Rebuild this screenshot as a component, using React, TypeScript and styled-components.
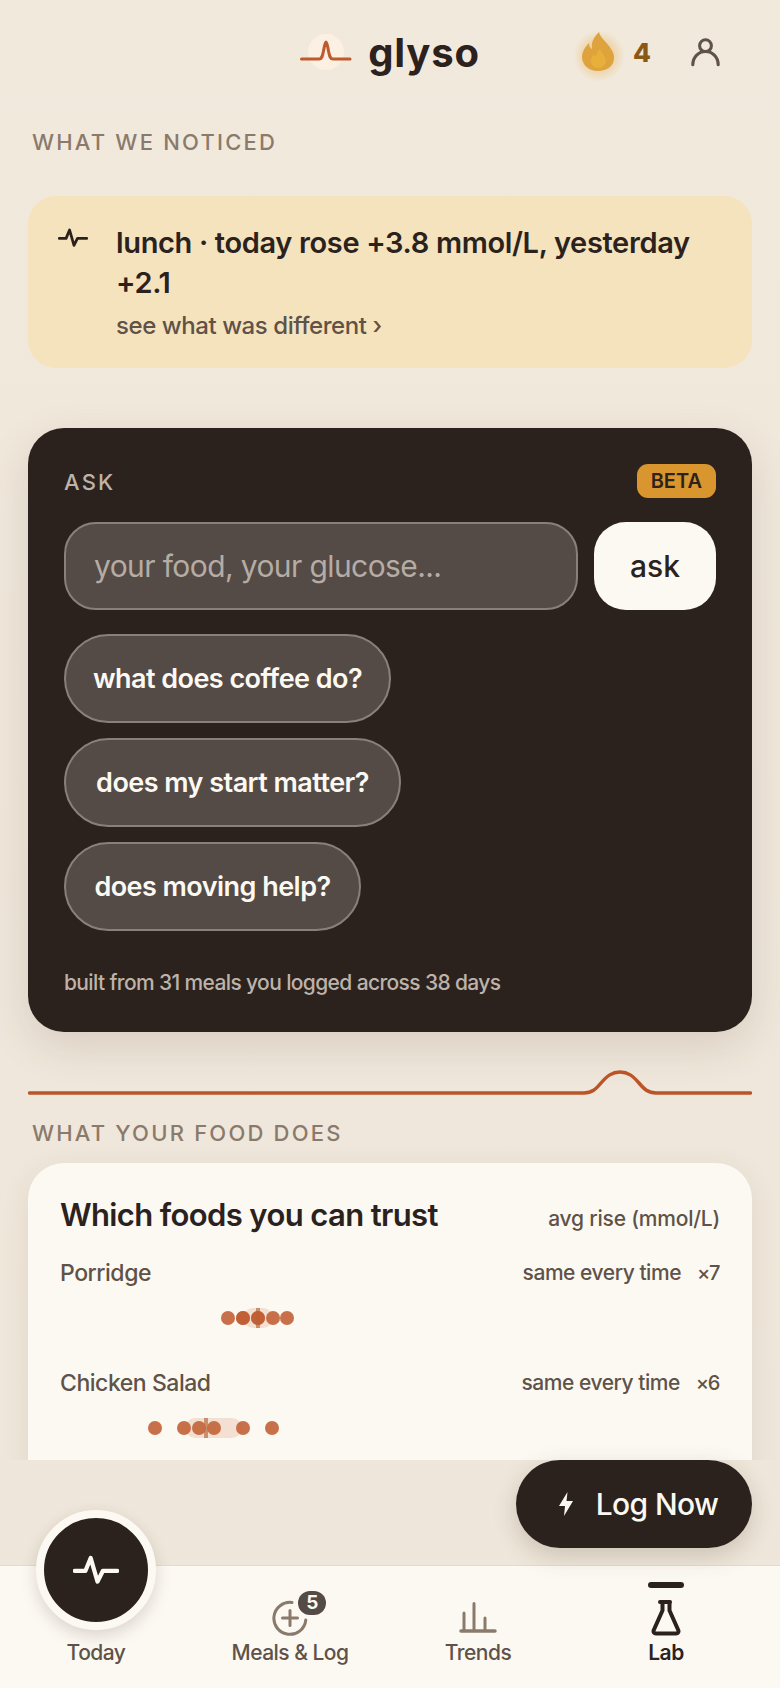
import React from 'react';
import styled, { createGlobalStyle } from 'styled-components';

const GlobalStyle = createGlobalStyle`
    * { box-sizing: border-box; }
    html, body { margin: 0; padding: 0; background: #f2e9dd; }
    body { font-family: Inter, "Noto Sans", sans-serif; color: #2b221d; }
`

const Screen = styled.div`
    position: relative;
    width: 780px;
    height: 1688px;
    overflow: hidden;
    display: flex;
    flex-direction: column;
    background: linear-gradient(#f2e9dd, #eee6da);
`
const Scroller = styled.main`
    flex: 0 0 1460px;
    overflow: hidden;
    padding: 0 28px;
`
const Header = styled.header`
    height: 104px;
    margin: 0 -28px;
    display: grid;
    grid-template-columns: 1fr auto 1fr;
    align-items: center;
`
const Brand = styled.div`
    grid-column: 2;
    display: flex;
    align-items: center;
    gap: 16px;
`
const Word = styled.span`
    font-size: 40px;
    font-weight: 700;
    letter-spacing: 0.02em;
`
const Streak = styled.div`
    justify-self: end;
    display: flex;
    align-items: center;
    padding-right: 60px;
`
const Flame = styled.svg`
    margin: 14px -11px 0;
`
const Count = styled.span`
    font-size: 26px;
    font-weight: 800;
    color: #8a5a14;
    margin: 0 40px 0 18px;
`
const SectionLabel = styled.h2<{ $top: number; $bottom: number }>`
    margin: ${p => p.$top}px 0 ${p => p.$bottom}px 4px;
    font-size: 22px;
    line-height: 28px;
    font-weight: 500;
    letter-spacing: 0.1em;
    color: #8a7a6c;
`
const Notice = styled.section`
    display: grid;
    grid-template-columns: 58px 1fr;
    padding: 27px 30px 24px 30px;
    height: 172px;
    border-radius: 28px;
    background: #f4e3bd;
`
const NoticeIcon = styled.div`
    padding-top: 5px;
`
const NoticeTitle = styled.div`
    font-size: 29px;
    line-height: 40px;
    font-weight: 600;
    letter-spacing: -0.012em;
`
const NoticeLink = styled.div`
    margin-top: 6px;
    font-size: 24px;
    line-height: 34px;
    font-weight: 500;
    letter-spacing: -0.018em;
    color: #5f5248;
`
const AskCard = styled.section`
    margin-top: 60px;
    height: 604px;
    padding: 36px 36px 0 36px;
    border-radius: 36px;
    background: #2b221d;
    box-shadow: 0 14px 44px rgba(70, 50, 30, 0.14);
`
const AskTop = styled.div`
    display: flex;
    justify-content: space-between;
    align-items: center;
    height: 34px;
`
const AskLabel = styled.span`
    padding-top: 2px;
    font-size: 22px;
    font-weight: 500;
    letter-spacing: 0.1em;
    color: #bdb3aa;
`
const Beta = styled.span`
    padding: 0 14px;
    height: 34px;
    line-height: 34px;
    border-radius: 11px;
    background: #d9962e;
    font-size: 20px;
    font-weight: 600;
    color: #2b221d;
`
const AskRow = styled.div`
    display: flex;
    gap: 16px;
    margin-top: 24px;
    height: 88px;
`
const AskInput = styled.div`
    flex: 1;
    display: flex;
    align-items: center;
    padding: 0 28px;
    border: 2px solid #8a807a;
    border-radius: 32px;
    background: #544b46;
    font-size: 30px;
    letter-spacing: -0.02em;
    color: #b5aca5;
`
const AskButton = styled.button`
    flex: 0 0 122px;
    border: 0;
    border-radius: 32px;
    background: #fcf9f3;
    font: 500 30px Inter, sans-serif;
    color: #2b221d;
`
const Chips = styled.div`
    margin-top: 24px;
    display: flex;
    flex-direction: column;
    align-items: flex-start;
    gap: 15px;
`
const Chip = styled.button<{ $width: number }>`
    width: ${p => p.$width}px;
    height: 89px;
    padding: 0;
    border: 2px solid #8a807a;
    border-radius: 45px;
    background: #544b46;
    font: 600 27px Inter, sans-serif;
    letter-spacing: -0.02em;
    color: #fcf9f3;
`
const AskNote = styled.p`
    margin: 37px 0 0;
    font-size: 21px;
    line-height: 30px;
    font-weight: 500;
    letter-spacing: -0.03em;
    color: #bdb3aa;
`
const Divider = styled.svg`
    display: block;
    margin-top: 31px;
    width: 724px;
    height: 32px;
`
const FoodCard = styled.section`
    height: 400px;
    padding: 31px 32px;
    border-radius: 36px;
    background: #fcf9f3;
    box-shadow: 0 6px 30px rgba(70, 50, 30, 0.08);
`
const FoodTop = styled.div`
    display: flex;
    justify-content: space-between;
    align-items: baseline;
`
const FoodTitle = styled.h3`
    margin: 0;
    font-size: 31px;
    line-height: 42px;
    font-weight: 600;
    letter-spacing: -0.02em;
`
const FoodUnit = styled.span`
    font-size: 21px;
    font-weight: 500;
    letter-spacing: -0.01em;
    color: #5f5248;
`
const FoodRow = styled.div`
    height: 110px;
    padding-top: 21px;
`
const FoodHead = styled.div`
    display: flex;
    justify-content: space-between;
    font-size: 23px;
    line-height: 32px;
    font-weight: 500;
    letter-spacing: -0.02em;
    color: #5f5248;
`
const FoodMeta = styled.span`
    display: flex;
    gap: 16px;
    font-size: 21px;
`
const FoodTimes = styled.span`
    font-size: 20px;
    letter-spacing: -0.07em;
    padding-right: 1px;
`
const Strip = styled.svg`
    display: block;
    margin-top: 15px;
    width: 660px;
    height: 28px;
`
const LogNow = styled.button`
    position: absolute;
    top: 1460px;
    right: 28px;
    width: 236px;
    height: 88px;
    display: flex;
    align-items: center;
    justify-content: center;
    gap: 22px;
    padding: 0 0 0 8px;
    border: 0;
    border-radius: 44px;
    background: #2b221d;
    box-shadow: 0 8px 24px rgba(70, 50, 30, 0.2);
    font: 500 30px Inter, sans-serif;
    letter-spacing: -0.02em;
    color: #fcf9f3;
`
const TodayFab = styled.div`
    position: absolute;
    left: 36px;
    top: 1510px;
    z-index: 2;
    width: 120px;
    height: 120px;
    display: flex;
    align-items: center;
    justify-content: center;
    border: 8px solid #fcf9f3;
    border-radius: 50%;
    background: #2b221d;
    box-shadow: 0 6px 16px rgba(70, 50, 30, 0.18);
`
const Nav = styled.nav`
    margin-top: auto;
    height: 123px;
    display: grid;
    grid-template-columns: 192px 196px 180px 196px;
    background: #fcf9f3;
    border-top: 1px solid #e4dace;
`
const NavItem = styled.div<{ $active?: boolean }>`
    position: relative;
    display: flex;
    flex-direction: column;
    align-items: center;
    justify-content: flex-end;
    padding-bottom: 20px;
    font-size: 21px;
    line-height: 30px;
    font-weight: ${p => (p.$active ? 600 : 500)};
    letter-spacing: -0.025em;
    color: ${p => (p.$active ? '#2b221d' : '#5f5248')};
`
const NavIcon = styled.div`
    position: relative;
    height: 40px;
    display: flex;
    align-items: flex-end;
    margin-bottom: 2px;
`
const Badge = styled.span`
    position: absolute;
    top: -5px;
    right: -18px;
    width: 28px;
    height: 24px;
    border-radius: 12px;
    background: #544b46;
    color: #fcf9f3;
    font-size: 19px;
    line-height: 24px;
    font-weight: 700;
    text-align: center;
`
const ActiveBar = styled.span`
    position: absolute;
    top: 16px;
    width: 36px;
    height: 6px;
    border-radius: 3px;
    background: #2b221d;
`

const chips = [
    { text: 'what does coffee do?', width: 327 },
    { text: 'does my start matter?', width: 337 },
    { text: 'does moving help?', width: 297 },
];

const foods = [
    { name: 'Porridge', times: 7, dots: [168, 183, 198, 213, 227], extra: [183, 198], band: [183, 213], median: 198 },
    { name: 'Chicken Salad', times: 6, dots: [95, 124, 139, 154, 183, 212], extra: [], band: [125, 182], median: 146 },
];

function Pulse({ size, color, width }: { size: number; color: string; width: number }) {
    return (
        <svg width={size} height={size * 0.66} viewBox="0 0 30 20" fill="none">
            <path d="M1 10.5h7l3.5-8.5 4.5 15.5 3.5-7h9.5" stroke={color} strokeWidth={width} strokeLinecap="round" strokeLinejoin="round" />
        </svg>
    );
}

export default function App(): JSX.Element {
    return (
        <Screen>
            <GlobalStyle />
            <Scroller>
                <Header>
                    <Brand>
                        <svg width="52" height="40" viewBox="0 0 52 40" fill="none">
                            <ellipse cx="26" cy="20" rx="18" ry="18" fill="#fbf0e2" />
                            <path d="M1.500 27H19c3 0 3.500-3 4.500-8 1-5 1.500-9 2.500-9s1.500 4 2.500 9c1 5 1.500 8 4.500 8h17" stroke="#be5a2c" strokeWidth="3" strokeLinecap="round" />
                        </svg>
                        <Word>glyso</Word>
                    </Brand>
                    <Streak>
                        <Flame width="56" height="60" viewBox="0 0 56 60">
                            <defs>
                                <radialGradient id="glow">
                                    <stop offset="55%" stopColor="#e6b45a" stopOpacity="0.38" />
                                    <stop offset="100%" stopColor="#e6b45a" stopOpacity="0" />
                                </radialGradient>
                            </defs>
                            <circle cx="29" cy="27" r="26" fill="url(#glow)" />
                            <path d="M29 3C30 9 38 14 41 20C43 23 44 25 44 29C44 37 37 42 28 42C19 42 12 36 12 28C12 23 15 18 19 14C19 17 20 19 22 20C21 13 24 8 29 3Z" fill="#dfa33e" />
                            <path d="M30 20C31 24 36 27 36 32C36 36 32 39 28.500 39C24 39 21 36 21 32C21 29 22 27 24 25C24.500 26.500 25 27 26 27.500C26 25 28 22 30 20Z" fill="#e6b03a" />
                        </Flame>
                        <Count>4</Count>
                        <svg width="29" height="30" viewBox="0 0 32 32" fill="none" stroke="#5f5248" strokeWidth="3.400" strokeLinecap="round">
                            <circle cx="16" cy="9" r="6.500" />
                            <path d="M2 30c0-8 6-14.500 14-14.500S30 22 30 30" />
                        </svg>
                    </Streak>
                </Header>
                <SectionLabel $top={24} $bottom={40}>WHAT WE NOTICED</SectionLabel>
                <Notice>
                    <NoticeIcon>
                        <Pulse size={30} color="#2b221d" width={2.8} />
                    </NoticeIcon>
                    <div>
                        <NoticeTitle>lunch · today rose +3.8 mmol/L, yesterday +2.1</NoticeTitle>
                        <NoticeLink>see what was different ›</NoticeLink>
                    </div>
                </Notice>
                <AskCard>
                    <AskTop>
                        <AskLabel>ASK</AskLabel>
                        <Beta>BETA</Beta>
                    </AskTop>
                    <AskRow>
                        <AskInput>your food, your glucose...</AskInput>
                        <AskButton>ask</AskButton>
                    </AskRow>
                    <Chips>
                        {chips.map(chip => (
                            <Chip key={chip.text} $width={chip.width}>{chip.text}</Chip>
                        ))}
                    </Chips>
                    <AskNote>built from 31 meals you logged across 38 days</AskNote>
                </AskCard>
                <Divider viewBox="0 0 724 32" fill="none">
                    <path d="M1.500 30H556c8 0 12-4 17-10 6-7 11-11 19-11s13 4 19 11c5 6 9 10 17 10h94.500" stroke="#bb5528" strokeWidth="3.500" strokeLinecap="round" />
                </Divider>
                <SectionLabel $top={24} $bottom={16}>WHAT YOUR FOOD DOES</SectionLabel>
                <FoodCard>
                    <FoodTop>
                        <FoodTitle>Which foods you can trust</FoodTitle>
                        <FoodUnit>avg rise (mmol/L)</FoodUnit>
                    </FoodTop>
                    {foods.map(food => (
                        <FoodRow key={food.name}>
                            <FoodHead>
                                <span>{food.name}</span>
                                <FoodMeta>
                                    <span>same every time</span>
                                    <FoodTimes>×{food.times}</FoodTimes>
                                </FoodMeta>
                            </FoodHead>
                            <Strip viewBox="0 0 660 28">
                                <rect x={food.band[0]} y="4" width={food.band[1] - food.band[0]} height="20" rx="10" fill="#f3e0d2" />
                                <rect x={food.median - 2} y="4" width="4" height="20" fill="#c98e6e" />
                                {food.dots.map(x => (
                                    <circle key={x} cx={x} cy="14" r="7" fill="#c4683f" opacity="0.95" />
                                ))}
                                {food.extra.map(x => (
                                    <circle key={x} cx={x} cy="14" r="7" fill="#be5a2c" opacity="0.7" />
                                ))}
                            </Strip>
                        </FoodRow>
                    ))}
                </FoodCard>
            </Scroller>
            <LogNow>
                <svg width="16" height="26" viewBox="0 0 16 26">
                    <path d="M9.500 1 1 15h6l-1 10 9-15H8.500z" fill="#fcf9f3" />
                </svg>
                Log Now
            </LogNow>
            <TodayFab>
                <Pulse size={46} color="#fcf9f3" width={2.8} />
            </TodayFab>
            <Nav>
                <NavItem>Today</NavItem>
                <NavItem>
                    <NavIcon>
                        <svg width="36" height="36" viewBox="0 0 36 36" fill="none" stroke="#8a7a6c" strokeWidth="3" strokeLinecap="round">
                            <path d="M20 2.500A16 16 0 1 0 33.800 20" />
                            <path d="M18 10.500v15M10.500 18h15" />
                        </svg>
                        <Badge>5</Badge>
                    </NavIcon>
                    Meals &amp; Log
                </NavItem>
                <NavItem>
                    <NavIcon>
                        <svg width="38" height="34" viewBox="0 0 38 34" fill="none" stroke="#8a7a6c" strokeLinecap="round">
                            <path d="M2 29h34" strokeWidth="3.500" />
                            <path d="M5 28V11M15 28V1.500M26 28V16" strokeWidth="3" />
                        </svg>
                    </NavIcon>
                    Trends
                </NavItem>
                <NavItem $active>
                    <ActiveBar />
                    <NavIcon>
                        <svg width="30" height="36" viewBox="0 0 30 36" fill="none" stroke="#2b221d" strokeWidth="4" strokeLinecap="round" strokeLinejoin="round">
                            <path d="M9 2h10" />
                            <path d="M11.500 2.500v8L2.800 30c-.8 2 .2 3.500 2.200 3.500h20c2 0 3-1.500 2.200-3.500L18.500 10.500v-8" />
                        </svg>
                    </NavIcon>
                    Lab
                </NavItem>
            </Nav>
        </Screen>
    );
}
